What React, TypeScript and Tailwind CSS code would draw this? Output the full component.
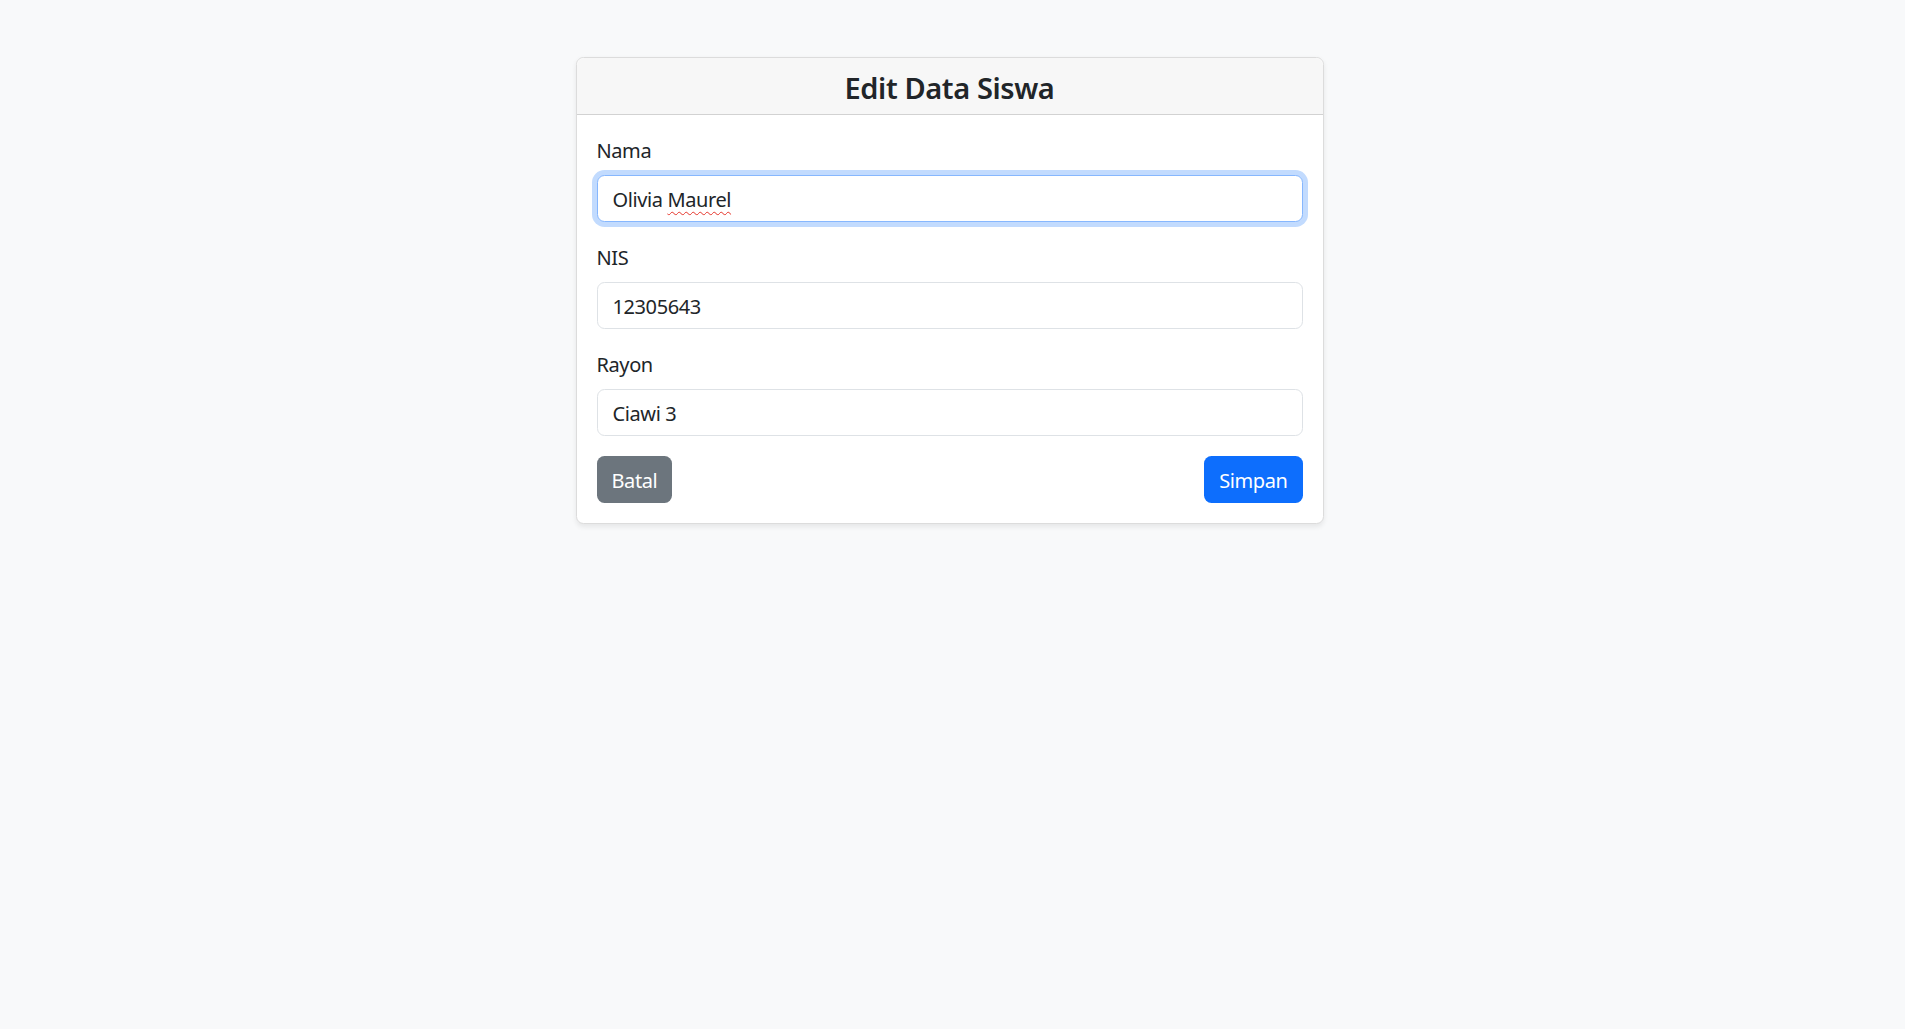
export default function App() {
  return (
    <div className="min-h-screen w-full bg-[#f8f9fa] font-['Noto_Sans',sans-serif] tracking-[-0.4px] text-[#212529]">
      <div className="flex justify-center pt-[57px] pr-[6px]">
        {/* Card */}
        <div className="w-[748px] rounded-[7.5px] border border-[#dcdcdc] bg-white shadow-[0_2.5px_5px_rgba(0,0,0,0.075)]">
          <div className="rounded-t-[7.5px] border-b border-[#d2d2d2] bg-[#f7f7f7] pt-[12px] pb-[8px] text-center">
            <h4 className="text-[29px] font-semibold leading-[36px]">Edit Data Siswa</h4>
          </div>

          <form className="p-[20px]" onSubmit={(e) => e.preventDefault()}>
            <div className="mb-[20px]">
              <label className="mb-[9px] block pt-[1px] text-[20px] leading-[30px]">Nama</label>
              <div className="h-[47px] w-full rounded-[7.5px] border border-[#86b7fe] bg-white px-[15px] pt-[8.5px] pb-[6.5px] text-[20px] leading-[30px] shadow-[0_0_0_5px_rgba(13,110,253,0.25)]">
                Olivia{" "}
                <span className="underline decoration-wavy decoration-[#e5342a] decoration-1 underline-offset-[4px]">
                  Maurel
                </span>
              </div>
            </div>

            <div className="mb-[20px]">
              <label className="mb-[9px] block pt-[1px] text-[20px] leading-[30px]">NIS</label>
              <input
                type="text"
                defaultValue="12305643"
                className="block h-[47px] w-full rounded-[7.5px] border border-[#dee2e6] bg-white px-[15px] pt-[8.5px] pb-[6.5px] text-[20px] leading-[30px] tracking-[-0.4px] outline-none"
              />
            </div>

            <div className="mb-[20px]">
              <label className="mb-[9px] block pt-[1px] text-[20px] leading-[30px]">Rayon</label>
              <input
                type="text"
                defaultValue="Ciawi 3"
                className="block h-[47px] w-full rounded-[7.5px] border border-[#dee2e6] bg-white px-[15px] pt-[8.5px] pb-[6.5px] text-[20px] leading-[30px] tracking-[-0.4px] outline-none"
              />
            </div>

            <div className="flex items-center justify-between">
              <button
                type="button"
                className="h-[47px] rounded-[7.5px] bg-[#6c757d] px-[15px] pt-[2px] text-[20px] leading-[30px] tracking-[-0.4px] text-white"
              >
                Batal
              </button>
              <button
                type="submit"
                className="h-[47px] rounded-[7.5px] bg-[#0d6efd] px-[15px] pt-[2px] text-[20px] leading-[30px] tracking-[-0.4px] text-white"
              >
                Simpan
              </button>
            </div>
          </form>
        </div>
      </div>
    </div>
  );
}
